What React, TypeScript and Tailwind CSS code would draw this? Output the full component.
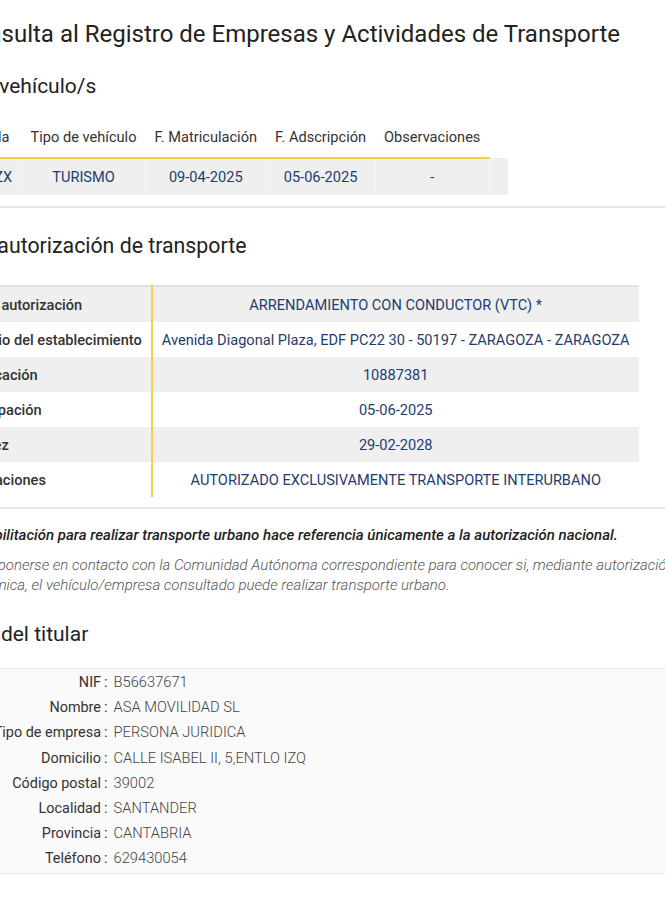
const vehiculoCols = [
  "Matrícula",
  "Tipo de vehículo",
  "F. Matriculación",
  "F. Adscripción",
  "Observaciones",
];

const vehiculoRow = ["8421 MZX", "TURISMO", "09-04-2025", "05-06-2025", "-"];

const autorizacion = [
  ["Tipo de autorización", "ARRENDAMIENTO CON CONDUCTOR (VTC) *"],
  [
    "Domicilio del establecimiento",
    "Avenida Diagonal Plaza, EDF PC22 30 - 50197 - ZARAGOZA - ZARAGOZA",
  ],
  ["Identificación", "10887381"],
  ["Desocupación", "05-06-2025"],
  ["F. validez", "29-02-2028"],
  ["Observaciones", "AUTORIZADO EXCLUSIVAMENTE TRANSPORTE INTERURBANO"],
];

const titular = [
  ["NIF", "B56637671"],
  ["Nombre", "ASA MOVILIDAD SL"],
  ["Tipo de empresa", "PERSONA JURIDICA"],
  ["Domicilio", "CALLE ISABEL II, 5,ENTLO IZQ"],
  ["Código postal", "39002"],
  ["Localidad", "SANTANDER"],
  ["Provincia", "CANTABRIA"],
  ["Teléfono", "629430054"],
];

export default function App() {
  return (
    <div className="w-full min-h-[911px] overflow-hidden bg-white font-['Roboto',sans-serif] text-[14px] text-[#333]">
      <div className="-ml-[56px] w-[820px] pt-[18px]">
        <h1 className="ml-[15px] text-[24px] leading-[32px] font-normal text-[#222]">
          Consulta al Registro de Empresas y Actividades de Transporte
        </h1>

        <h2 className="mt-[24px] -ml-[38px] text-[21px] leading-[24px] font-normal text-[#222]">
          Datos del vehículo/s
        </h2>

        <table className="mt-[19px] -ml-[8px] border-collapse text-[14.6px]">
          <thead>
            <tr>
              {vehiculoCols.map((c) => (
                <th
                  key={c}
                  className="border-b-2 border-[#f3d04a] px-[9px] py-[10px] text-center leading-[20px] font-normal text-[#333]"
                >
                  {c}
                </th>
              ))}
              <th className="px-[9px]"></th>
            </tr>
          </thead>
          <tbody>
            <tr className="bg-[#efefef]">
              {vehiculoRow.map((v, i) => (
                <td
                  key={i}
                  className="border-l border-[#f6f6f6] px-[9px] py-[8px] text-center leading-[20px] text-[#1e3d6e] first:border-l-0"
                >
                  {v}
                </td>
              ))}
              <td className="border-l border-[#f6f6f6] px-[9px]"></td>
            </tr>
          </tbody>
        </table>

        <div className="mt-[11px] h-[2px] bg-[#e6e6e6]" />

        <h2 className="mt-[26px] -ml-[58px] text-[21.3px] leading-[24px] font-normal text-[#222]">
          Datos de la autorización de transporte
        </h2>

        <table className="mt-[27px] -ml-[6px] border-collapse border-t-2 border-[#e3e3e3] text-[14.6px]">
          <tbody>
            {autorizacion.map(([k, v], i) => (
              <tr key={k} className={i % 2 === 0 ? "bg-[#efefef]" : "bg-white"}>
                <td className="border-r-2 border-[#f3d04a] pl-[11px] pr-[9px] py-[7.5px] text-left leading-[20px] font-medium text-[#333]">
                  {k}
                </td>
                <td className="px-[9px] py-[7.5px] text-center leading-[20px] text-[#1e3d6e]">
                  {v}
                </td>
              </tr>
            ))}
          </tbody>
        </table>

        <div className="mt-[10px] h-[2px] bg-[#e6e6e6]" />

        <div className="ml-[5px] mt-[16px] text-[15px]">
          <p className="leading-[20px] font-medium italic text-[#222]">
            * La habilitación para realizar transporte urbano hace referencia únicamente a la autorización nacional.
          </p>
          <p className="mt-[10px] leading-[20px] font-light italic text-[#555]">
            Deberá ponerse en contacto con la Comunidad Autónoma correspondiente para conocer si, mediante autorización
            <br />
            autonómica, el vehículo/empresa consultado puede realizar transporte urbano.
          </p>
        </div>

        <h2 className="mt-[27px] -ml-[3px] text-[21px] leading-[24px] font-normal text-[#222]">
          Datos del titular
        </h2>

        <div className="mt-[22px] border-y border-[#e8e8e8] bg-[#fafafa] py-[1px] text-[14.7px]">
          {titular.map(([k, v]) => (
            <div key={k} className="flex leading-[25.2px]">
              <span className="w-[157px] text-right text-[14.4px] text-[#333]">{k}</span>
              <span className="px-[3px] text-[#333]">:</span>
              <span className="ml-[3px] font-light text-[#444]">{v}</span>
            </div>
          ))}
        </div>
      </div>
    </div>
  );
}
